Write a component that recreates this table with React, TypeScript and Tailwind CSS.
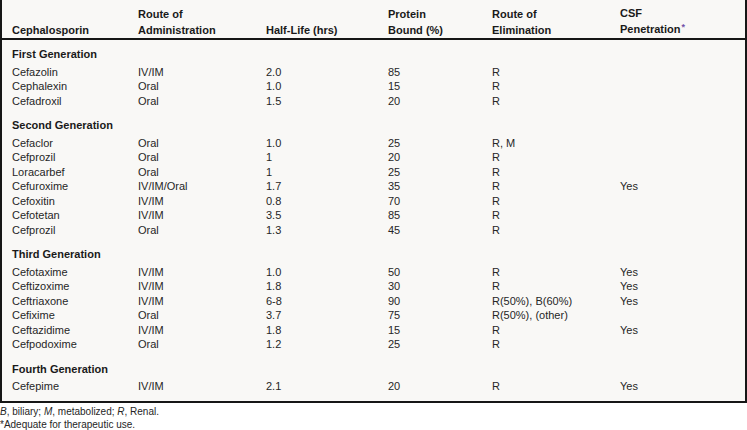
import React from 'react';

type Row = [string, string, string, string, string, string];

interface Group {
  title: string;
  rows: Row[];
}

const groups: Group[] = [
  {
    title: 'First Generation',
    rows: [
      ['Cefazolin', 'IV/IM', '2.0', '85', 'R', ''],
      ['Cephalexin', 'Oral', '1.0', '15', 'R', ''],
      ['Cefadroxil', 'Oral', '1.5', '20', 'R', ''],
    ],
  },
  {
    title: 'Second Generation',
    rows: [
      ['Cefaclor', 'Oral', '1.0', '25', 'R, M', ''],
      ['Cefprozil', 'Oral', '1', '20', 'R', ''],
      ['Loracarbef', 'Oral', '1', '25', 'R', ''],
      ['Cefuroxime', 'IV/IM/Oral', '1.7', '35', 'R', 'Yes'],
      ['Cefoxitin', 'IV/IM', '0.8', '70', 'R', ''],
      ['Cefotetan', 'IV/IM', '3.5', '85', 'R', ''],
      ['Cefprozil', 'Oral', '1.3', '45', 'R', ''],
    ],
  },
  {
    title: 'Third Generation',
    rows: [
      ['Cefotaxime', 'IV/IM', '1.0', '50', 'R', 'Yes'],
      ['Ceftizoxime', 'IV/IM', '1.8', '30', 'R', 'Yes'],
      ['Ceftriaxone', 'IV/IM', '6-8', '90', 'R(50%), B(60%)', 'Yes'],
      ['Cefixime', 'Oral', '3.7', '75', 'R(50%), (other)', ''],
      ['Ceftazidime', 'IV/IM', '1.8', '15', 'R', 'Yes'],
      ['Cefpodoxime', 'Oral', '1.2', '25', 'R', ''],
    ],
  },
  {
    title: 'Fourth Generation',
    rows: [['Cefepime', 'IV/IM', '2.1', '20', 'R', 'Yes']],
  },
];

const cols = 'grid grid-cols-[126px_128px_122px_104px_128px_1fr]';

function DataRow({ row }: { row: Row }) {
  return (
    <div className={`${cols} h-[14.5px] leading-[14.5px]`}>
      {row.map((cell, i) => (
        <div key={i} className="whitespace-nowrap">
          {cell}
        </div>
      ))}
    </div>
  );
}

export default function App() {
  return (
    <div className="w-[747px] h-[430px] bg-white text-[#262626] font-['Liberation_Sans',Arial,sans-serif] text-[11px]">
      <div className="bg-[#f9f8f6] border-l-2 border-r-2 border-b-2 border-[#161616]">
        <div
          className={`${cols} items-end pl-[10px] pt-[4px] h-[40px] border-b-2 border-[#161616] font-bold leading-[16px] text-[#1a1a1a]`}
        >
          <div>Cephalosporin</div>
          <div>
            Route of
            <br />
            Administration
          </div>
          <div>Half-Life (hrs)</div>
          <div>
            Protein
            <br />
            Bound (%)
          </div>
          <div>
            Route of
            <br />
            Elimination
          </div>
          <div>
            CSF
            <br />
            Penetration
            <span className="text-[#7252a8] text-[9px] relative top-[-3px] ml-[1px]">*</span>
          </div>
        </div>

        <div className="pl-[10px] pt-[7px] pb-[7px] flex flex-col gap-[10px]">
          {groups.map((group) => (
            <div key={group.title}>
              <div className="h-[14.5px] leading-[14.5px] mb-[3px] font-bold text-[#1a1a1a]">
                {group.title}
              </div>
              {group.rows.map((row, i) => (
                <DataRow key={i} row={row} />
              ))}
            </div>
          ))}
        </div>
      </div>

      <div className="pt-[2px] text-[10px] leading-[13px]">
        <div>
          <i>B</i>, biliary; <i>M</i>, metabolized; <i>R</i>, Renal.
        </div>
        <div>*Adequate for therapeutic use.</div>
      </div>
    </div>
  );
}
